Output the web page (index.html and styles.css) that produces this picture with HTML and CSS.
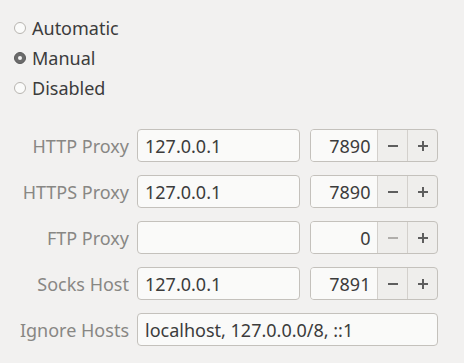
FILE: index.html
```html
<!DOCTYPE html>
<html lang="en">
<head>
  <meta charset="UTF-8">
  <title>Network Proxy</title>
  <link rel="stylesheet" href="styles.css">
</head>
<body>
  <div class="modes">
    <label class="radio"><span class="dot"></span>Automatic</label>
    <label class="radio checked"><span class="dot"></span>Manual</label>
    <label class="radio"><span class="dot"></span>Disabled</label>
  </div>

  <div class="proxy-grid">
    <span class="name">HTTP Proxy</span>
    <div class="entry">127.0.0.1</div>
    <div class="spin">
      <span class="value">7890</span>
      <span class="btn"><svg width="12" height="12" viewBox="0 0 12 12"><path d="M1 6h10" stroke="currentColor" stroke-width="2"/></svg></span>
      <span class="btn"><svg width="12" height="12" viewBox="0 0 12 12"><path d="M1 6h10M6 1v10" stroke="currentColor" stroke-width="2"/></svg></span>
    </div>

    <span class="name">HTTPS Proxy</span>
    <div class="entry">127.0.0.1</div>
    <div class="spin">
      <span class="value">7890</span>
      <span class="btn"><svg width="12" height="12" viewBox="0 0 12 12"><path d="M1 6h10" stroke="currentColor" stroke-width="2"/></svg></span>
      <span class="btn"><svg width="12" height="12" viewBox="0 0 12 12"><path d="M1 6h10M6 1v10" stroke="currentColor" stroke-width="2"/></svg></span>
    </div>

    <span class="name">FTP Proxy</span>
    <div class="entry"></div>
    <div class="spin">
      <span class="value">0</span>
      <span class="btn disabled"><svg width="12" height="12" viewBox="0 0 12 12"><path d="M1 6h10" stroke="currentColor" stroke-width="2"/></svg></span>
      <span class="btn"><svg width="12" height="12" viewBox="0 0 12 12"><path d="M1 6h10M6 1v10" stroke="currentColor" stroke-width="2"/></svg></span>
    </div>

    <span class="name">Socks Host</span>
    <div class="entry">127.0.0.1</div>
    <div class="spin">
      <span class="value">7891</span>
      <span class="btn"><svg width="12" height="12" viewBox="0 0 12 12"><path d="M1 6h10" stroke="currentColor" stroke-width="2"/></svg></span>
      <span class="btn"><svg width="12" height="12" viewBox="0 0 12 12"><path d="M1 6h10M6 1v10" stroke="currentColor" stroke-width="2"/></svg></span>
    </div>

    <span class="name">Ignore Hosts</span>
    <div class="entry wide">localhost, 127.0.0.0/8, ::1</div>
  </div>
</body>
</html>
```

FILE: styles.css
```css
body {
  margin: 0;
  background: #f2f1f0;
  font-family: "Noto Sans", "DejaVu Sans", sans-serif;
  font-size: 18px;
  color: #3c3c3c;
}

.modes { padding: 13px 0 0 14px; }
.radio { display: flex; align-items: center; height: 30px; }
.dot {
  width: 10px; height: 10px;
  border: 1px solid #b8b5b0;
  border-radius: 50%;
  background: #fbfbfa;
  margin-right: 6px;
  display: flex; align-items: center; justify-content: center;
}
.checked .dot { background: #6b6b6b; border-color: #5a5a5a; }
.checked .dot::after { content: ""; width: 4px; height: 4px; border-radius: 50%; background: #f4f4f4; }

.proxy-grid {
  display: grid;
  grid-template-columns: 129px 163px 130px;
  column-gap: 8px;
  row-gap: 13px;
  margin-top: 26px;
  align-items: center;
}
.name { text-align: right; color: #888784; }

.entry {
  box-sizing: border-box;
  height: 33px;
  border: 1px solid #c4c1bc;
  border-radius: 4px;
  background: #fafaf9;
  padding: 0 7px;
  display: flex; align-items: center;
}
.entry.wide { grid-column: 2 / 4; }

.spin {
  display: flex;
  height: 33px;
  box-sizing: border-box;
  margin-left: 2px;
  border: 1px solid #c4c1bc;
  border-radius: 4px;
  background: #efeeec;
  overflow: hidden;
}
.spin .value {
  width: 69px;
  background: #fafaf9;
  padding-right: 7px;
  box-sizing: border-box;
  display: flex; align-items: center; justify-content: flex-end;
}
.spin .btn {
  width: 30px;
  border-left: 1px solid #d3d0cc;
  color: #5e5e5e;
  display: flex; align-items: center; justify-content: center;
}
.spin .btn.disabled { color: #b0aeab; }
```
